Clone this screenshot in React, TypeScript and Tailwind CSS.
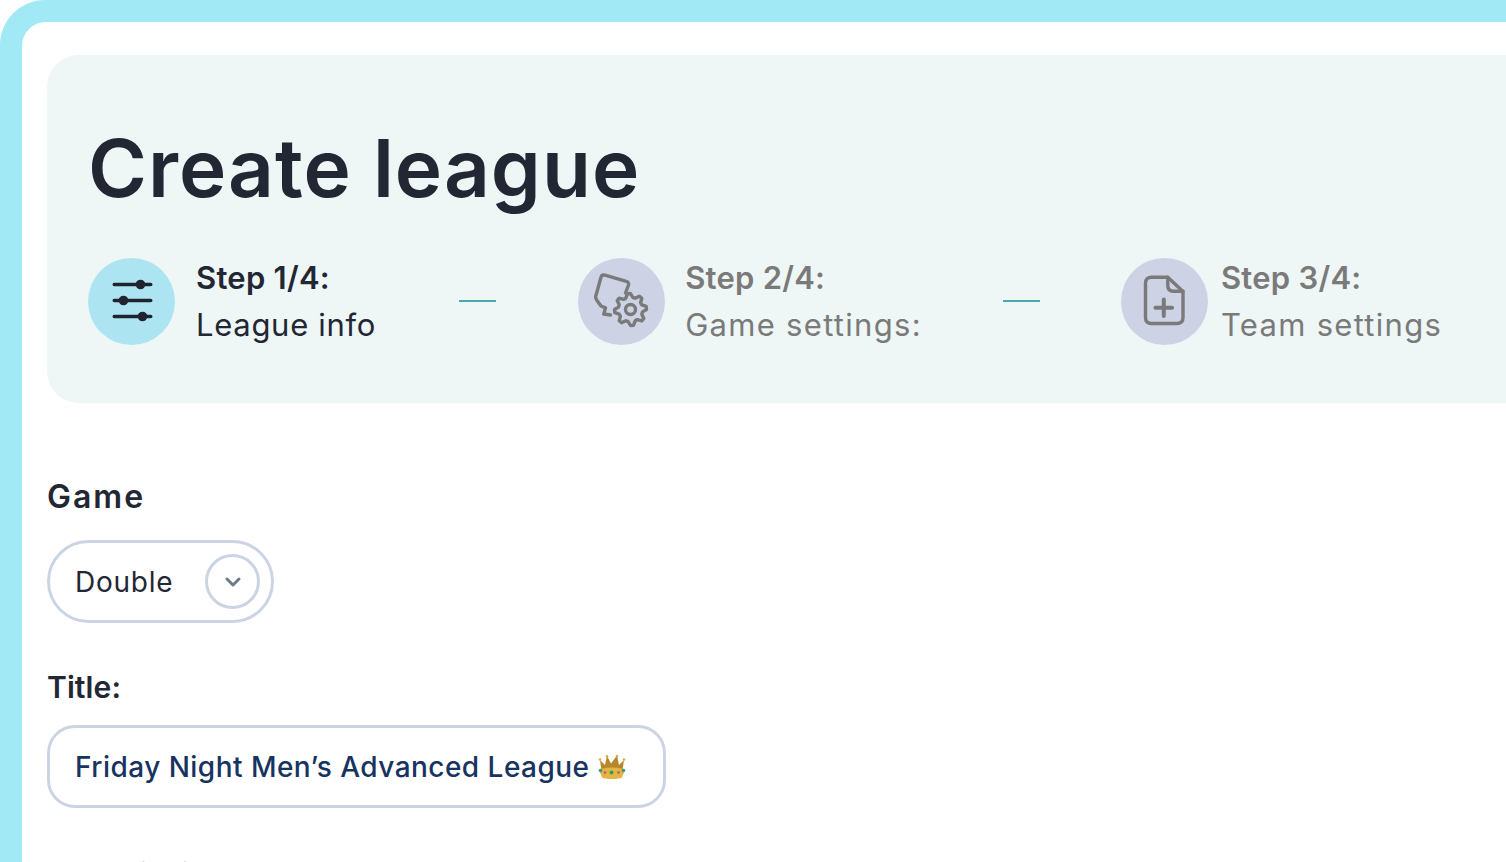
import React from 'react';
import { ChevronDown } from 'lucide-react';

const font = "font-['Inter',sans-serif]";

const Sliders = () => (
  <svg width="44" height="44" viewBox="0 0 44 44" fill="none" stroke="#1f2430" strokeWidth="3.4" strokeLinecap="round">
    <path d="M4.2 5.5h36.6M4.2 21.5h36.6M4.2 37.5h36.6" />
    <circle cx="30.5" cy="5.5" r="4.8" fill="#1f2430" stroke="none" />
    <circle cx="13.5" cy="21.5" r="4.8" fill="#1f2430" stroke="none" />
    <circle cx="32.5" cy="37.5" r="4.8" fill="#1f2430" stroke="none" />
  </svg>
);

// eight rounded teeth around the middle of the gear
const gearPath = () => {
  const pts: string[] = [];
  for (let i = 0; i < 32; i++) {
    const a = (i / 32) * Math.PI * 2 - Math.PI / 2 - Math.PI / 16;
    const r = i % 4 < 2 ? 16 : 12.2;
    pts.push(`${(36.5 + r * Math.cos(a)).toFixed(1)} ${(36.5 + r * Math.sin(a)).toFixed(1)}`);
  }
  return `M${pts.join('L')}z`;
};

const Gear = () => (
  <svg width="56" height="56" viewBox="0 0 56 56" fill="none" stroke="#7a7a7a" strokeWidth="3.4" strokeLinecap="round" strokeLinejoin="round">
    <path d="M31.5 20 L34.5 12 C35 10 34 8.8 31.5 8.2 L11 2.2 C8.8 1.6 7.6 2.2 7 4.2 L1.8 23 C1.3 25 1.8 26 3 27.5 L7 33 L11.5 34.8 L9.8 41 L16.5 42" />
    <path d={gearPath()} />
    <circle cx="36.5" cy="36.5" r="5" />
  </svg>
);

const FilePlus = () => (
  <svg width="44" height="54" viewBox="0 0 44 54" fill="none" stroke="#7a7a7a" strokeWidth="3.4" strokeLinecap="round" strokeLinejoin="round">
    <path d="M25.8 3.2H9.5C5.5 3.2 3.5 5.2 3.5 9.2v34.3c0 4 2 6 6 6h25.5c4 0 6-2 6-6V17.5z" />
    <path d="M25.8 3.2v8.3c0 3.6 2 5.8 5.6 5.8H41" />
    <path d="M21.8 25.5v16.6M13.5 33.8h16.6" strokeWidth="4" />
  </svg>
);

const Crown = () => (
  <svg width="28" height="24" viewBox="0 0 28 24">
    <path d="M4 19L2 5l5 5 2-9 4 7.5L19 0.5l2 9.5 5-5-2 14z" fill="#b8872b" />
    <circle cx="2" cy="4.5" r="1.3" fill="#d9ac3e" />
    <circle cx="9" cy="1.4" r="1.3" fill="#d9ac3e" />
    <circle cx="19" cy="1" r="1.3" fill="#d9ac3e" />
    <circle cx="26" cy="4.5" r="1.3" fill="#d9ac3e" />
    <path d="M1 15c5-3.5 21-3.5 26 0l-3 7.5c-5 2-15 2-20 0z" fill="#e5b63f" />
    <circle cx="2.5" cy="15.5" r="1.8" fill="#3d9a7a" />
    <circle cx="7" cy="17.5" r="1.3" fill="#c04bb0" />
    <circle cx="13.5" cy="17.5" r="2" fill="#2f9a70" />
    <circle cx="20.5" cy="17.5" r="1.3" fill="#c04bb0" />
    <circle cx="25.5" cy="15.5" r="1.8" fill="#3d9a7a" />
  </svg>
);

const Dash = () => <div className="h-[2px] w-[37px] shrink-0 bg-[#4aa9ae]" />;

const Step = ({ icon, bg, title, label, muted, gap, spacing }: { icon: React.ReactNode; bg: string; title: string; label: string; muted?: boolean; gap: string; spacing: string }) => (
  <div className={`flex shrink-0 items-center ${gap}`}>
    <div className={`flex h-[87px] w-[87px] shrink-0 items-center justify-center rounded-full ${bg}`}>{icon}</div>
    <div className={`whitespace-nowrap ${muted ? 'text-[#7a7a7a]' : 'text-[#222733]'}`}>
      <div className="text-[31px] leading-[47px] font-semibold tracking-[0.25px]">{title}</div>
      <div className={`text-[31px] leading-[47px] ${spacing}`}>{label}</div>
    </div>
  </div>
);

export default function App() {
  return (
    <div className={`h-[862px] w-[1506px] overflow-hidden bg-white ${font}`}>
      <div className="h-[940px] w-[1600px] rounded-tl-[45px] bg-[#a0e9f5] pt-[22px] pl-[22px]">
        <div className="h-full rounded-tl-[24px] bg-white pt-[33px] pl-[25px]">
          <div className="h-[348px] w-[1500px] rounded-[32px] bg-[#eef7f6] pt-[72px] pl-[41px]">
            <h1 className="text-[80px] leading-[82px] font-semibold tracking-[1px] text-[#222733]">Create league</h1>
            <div className="mt-[45px] flex items-center">
              <Step icon={<Sliders />} bg="bg-[#ace5f1]" title="Step 1/4:" label="League info" gap="gap-[21px]" spacing="tracking-[0.7px]" />
              <div className="ml-[83px] mr-[82px]"><Dash /></div>
              <Step icon={<Gear />} bg="bg-[#cdd2e4]" title="Step 2/4:" label="Game settings:" muted gap="gap-[20px]" spacing="tracking-[1.3px]" />
              <div className="ml-[81px] mr-[81px]"><Dash /></div>
              <Step icon={<FilePlus />} bg="bg-[#cdd2e4]" title="Step 3/4:" label="Team settings" muted gap="gap-[13px]" spacing="tracking-[1.3px]" />
            </div>
          </div>

          <div className="mt-[73px] text-[32px] leading-[42px] font-semibold tracking-[2px] text-[#222733]">Game</div>
          <div className="mt-[22px] flex h-[83px] w-[227px] items-center justify-between rounded-full border-[3px] border-[#ccd4e4] pr-[11px] pl-[25px]">
            <span className="text-[28px] tracking-[0.75px] text-[#222733]">Double</span>
            <span className="flex h-[55px] w-[55px] items-center justify-center rounded-full border-[3px] border-[#ccd4e4]">
              <ChevronDown size={24} strokeWidth={3} color="#6f7a8c" />
            </span>
          </div>

          <div className="mt-[43px] text-[30px] leading-[42px] font-semibold tracking-[0.1px] text-[#222733]">Title:</div>
          <div className="mt-[17px] flex h-[83px] w-[619px] items-center gap-[8px] rounded-[28px] border-[3px] border-[#ccd4e4] pl-[25px]">
            <span className="whitespace-nowrap text-[28px] font-medium tracking-[0.47px] text-[#17335f]">Friday Night Men’s Advanced League</span>
            <Crown />
          </div>

          <div className="mt-[45px] text-[30px] leading-[42px] font-semibold tracking-[1.4px] text-[#222733]">Description</div>
        </div>
      </div>
    </div>
  );
}
